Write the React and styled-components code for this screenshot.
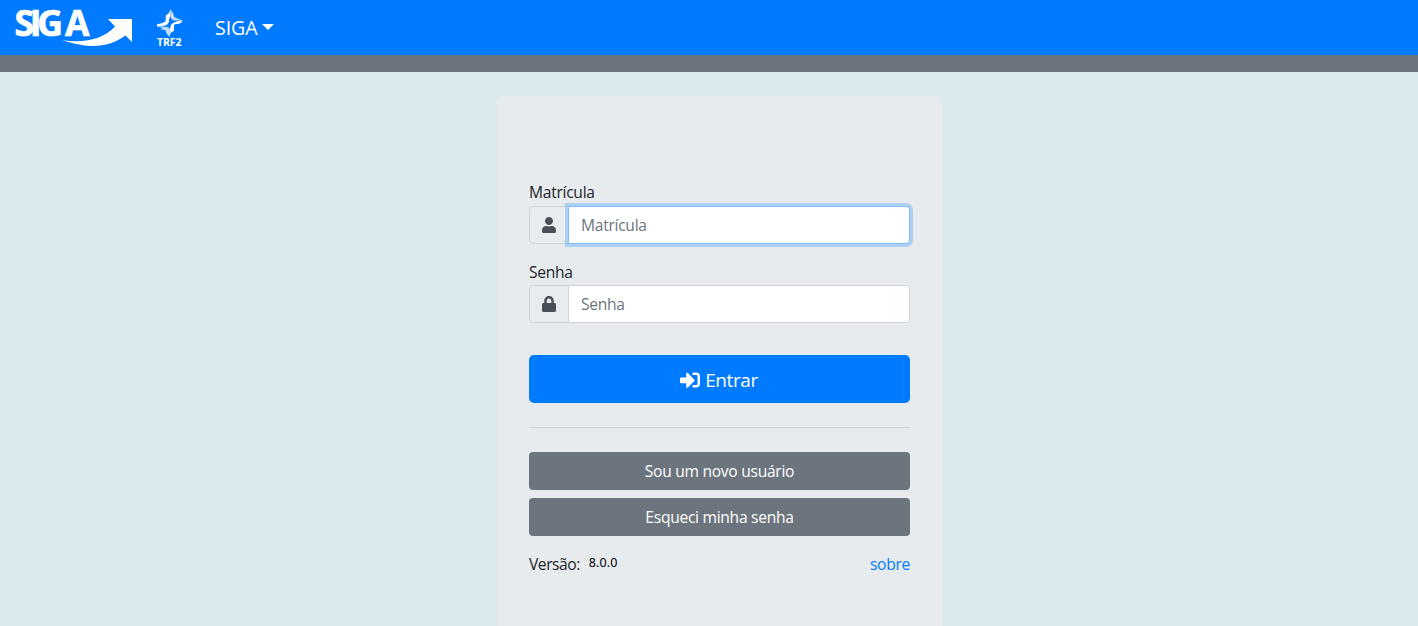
import React from "react";
import styled, { createGlobalStyle } from "styled-components";
import { FaUser, FaLock, FaSignInAlt } from "react-icons/fa";

const GlobalStyle = createGlobalStyle`
  *, *::before, *::after { box-sizing: border-box; }
  html, body { margin: 0; height: 100%; overflow: hidden; }
  body {
    background: #dae9ed;
    color: #212529;
    font: 400 16px/24px "Open Sans", "Noto Sans", sans-serif;
  }
`;

const Navbar = styled.nav`
  display: flex;
  align-items: center;
  height: 55px;
  padding-left: 15px;
  background: #007bff;
  color: #fff;
`;

const SystemLogo = styled.svg`
  display: block;
  width: 118px;
  height: 40px;
  margin-right: 23px;
  overflow: visible;
`;

const CourtLogo = styled.svg`
  display: block;
  width: 28px;
  height: 40px;
  margin-right: 31px;
  overflow: visible;
`;

const NavLink = styled.a`
  display: flex;
  align-items: center;
  font-size: 19.6px;
  letter-spacing: -0.1px;
`;

const Caret = styled.span`
  margin: 0 0 2px 5px;
  border-top: 6px solid #fff;
  border-left: 6px solid transparent;
  border-right: 6px solid transparent;
`;

const SubBar = styled.div`
  height: 17px;
  background: #6c757d;
`;

const Main = styled.main`
  display: flex;
  justify-content: center;
  padding: 24px 0 0 21px;
`;

const Card = styled.form`
  width: 445px;
  height: 560px;
  padding: 84px 32px 0;
  border-radius: 5px;
  background: #e7ebee;
`;

const Field = styled.div`
  margin-bottom: ${(p) => p.$gap}px;
`;

const Label = styled.label`
  display: block;
  height: ${(p) => p.$height}px;
  font-size: 15.6px;
  letter-spacing: -0.28px;
`;

const InputGroup = styled.div`
  display: flex;
  height: 38px;
`;

const Addon = styled.span`
  display: flex;
  align-items: center;
  justify-content: center;
  width: 40px;
  padding-right: 1px;
  margin-right: -1px;
  border: 1px solid #ced4da;
  border-radius: 4px 0 0 4px;
  background: #e9ecef;
  color: #495057;
  font-size: 16px;
`;

const Input = styled.input`
  flex: 1;
  min-width: 0;
  padding: 6px 12px;
  border: 1px solid ${(p) => (p.$active ? "#80bdff" : "#ced4da")};
  border-radius: 0 4px 4px 0;
  outline: none;
  background: #fff;
  box-shadow: ${(p) => (p.$active ? "0 0 0 3px rgba(0, 123, 255, 0.25)" : "none")};
  font: inherit;
  font-size: 15.6px;
  letter-spacing: -0.28px;
  &::placeholder { color: #6c757d; opacity: 1; }
`;

const Button = styled.button`
  display: flex;
  align-items: center;
  justify-content: center;
  width: 100%;
  height: 38px;
  margin: 0 0 8px;
  padding: 0;
  border: 0;
  border-radius: 4px;
  background: #6c757d;
  color: #fff;
  font: inherit;
  font-size: 15.6px;
  letter-spacing: -0.28px;
`;

const PrimaryButton = styled(Button)`
  gap: 5px;
  height: 48px;
  margin: 0;
  padding: 1px 1px 0 0;
  border-radius: 5px;
  background: #007bff;
  font-size: 19px;
  letter-spacing: -0.4px;
`;

const Divider = styled.hr`
  height: 1px;
  margin: 24px 0;
  border: 0;
  background: #d0d4d8;
`;

const Footer = styled.div`
  display: flex;
  align-items: center;
  margin-top: 16px;
  font-size: 15.6px;
  letter-spacing: -0.45px;
`;

const Version = styled.span`
  margin: -2px 0 0 9px;
  color: #000;
  font-family: "Noto Sans", sans-serif;
  font-size: 12.5px;
  letter-spacing: 0.1px;
`;

const AboutLink = styled.a`
  margin-left: auto;
  color: #007bff;
  letter-spacing: -0.28px;
`;

function SigaMark() {
  return (
    <SystemLogo viewBox="15 8 118 40" fill="#fff">
      <g fontFamily="Open Sans" fontWeight="700" fontSize="35.5" stroke="#fff" strokeWidth="0.7">
        <text x="14.500 29.800 37.300" y="36">SIG</text>
        <text x="65" y="36">A</text>
      </g>
      <path d="M62 40.2Q98 45 115 26.5L108 19H132V42L125.500 35.500C107 48 91 49 62 40.200Z" />
    </SystemLogo>
  );
}

function CourtMark() {
  return (
    <CourtLogo viewBox="156 8 28 40" fill="#fff">
      <path d="M170.300 8.500L170.300 16.500Q169 18 169 21.500Q168.500 26.500 157 26.500V24.200Q165.500 23 165.800 20V15.200Q169.800 14 170.300 8.500Z" />
      <path d="M157 26.500L165 26.800Q169.500 26.500 169.500 29.500L169.700 37Q166 34 165.500 30.500Q163.500 29 160.500 29.800L162.500 27.900Z" opacity=".75" />
      <path d="M169.500 37V29.500Q170.500 28.500 170.500 26.500Q170.500 22 182.500 20.200Q182 24.200 174.500 24.200Q173.900 25 173.900 28V31Q170 32 169.500 37Z" />
      <path d="M170.500 9V16.500Q171.200 20.500 175 20.500L182.500 20.200L176.800 18.200Q173.800 17.800 173.500 14Z" opacity=".75" />
      <text x="157" y="45.600" fontFamily="Open Sans" fontWeight="700" fontSize="10.500" textLength="24.500" lengthAdjust="spacingAndGlyphs">TRF2</text>
    </CourtLogo>
  );
}

export default function App() {
  return (
    <>
      <GlobalStyle />
      <Navbar>
        <SigaMark />
        <CourtMark />
        <NavLink>SIGA<Caret /></NavLink>
      </Navbar>
      <SubBar />
      <Main>
        <Card>
          <Field $gap={16}>
            <Label $height={26}>Matrícula</Label>
            <InputGroup>
              <Addon><FaUser /></Addon>
              <Input $active placeholder="Matrícula" />
            </InputGroup>
          </Field>
          <Field $gap={32}>
            <Label $height={25}>Senha</Label>
            <InputGroup>
              <Addon><FaLock /></Addon>
              <Input type="password" placeholder="Senha" />
            </InputGroup>
          </Field>
          <PrimaryButton type="button">
            <FaSignInAlt size={20} />
            <span>Entrar</span>
          </PrimaryButton>
          <Divider />
          <Button type="button">Sou um novo usuário</Button>
          <Button type="button">Esqueci minha senha</Button>
          <Footer>
            <span>Versão:</span>
            <Version>8.0.0</Version>
            <AboutLink>sobre</AboutLink>
          </Footer>
        </Card>
      </Main>
    </>
  );
}
